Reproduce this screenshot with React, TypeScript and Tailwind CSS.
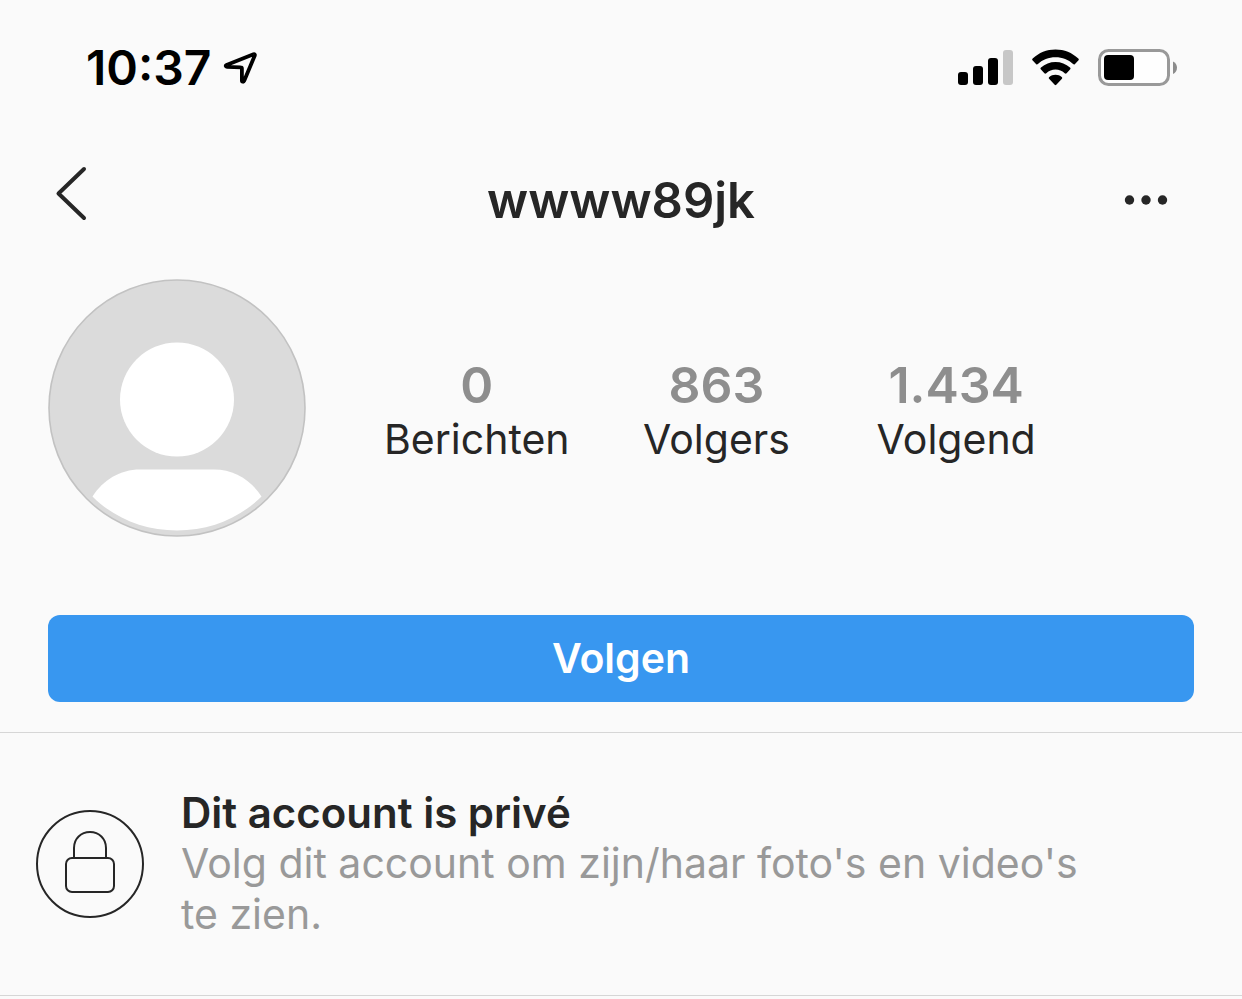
import type { ReactNode } from "react";

const stats = [
  { value: "0", label: "Berichten" },
  { value: "863", label: "Volgers" },
  { value: "1.434", label: "Volgend" },
];

const StatusBar = () => (
  <div className="flex h-34 items-center justify-between pl-[86px] pr-16 text-black">
    <div className="flex items-center gap-3">
      <span className="text-[48px] leading-none font-semibold">10:37</span>
      <svg className="h-9 w-9" viewBox="0 0 36 36" fill="none" aria-hidden="true">
        <path
          d="M3.500 15 L30.500 4.200 C31.500 3.800 32.100 4.400 31.800 5.400 L21.200 30.800 C20.600 32.200 18.900 32 18.900 30.500 L18.900 18.600 C18.900 17.700 18.600 17.400 17.700 17.400 L4 16.900 C2.600 16.800 2.300 15.500 3.500 15 Z"
          stroke="currentColor"
          strokeWidth="3.800"
          strokeLinejoin="round"
        />
      </svg>
    </div>
    <div className="flex items-center">
      <svg className="h-9 w-14" viewBox="0 0 56 36" fill="currentColor" aria-hidden="true">
        <rect x="0" y="22" width="10" height="13" rx="3" />
        <rect x="15" y="16" width="10" height="19" rx="3" />
        <rect x="30" y="8" width="10" height="27" rx="3" />
        <rect x="45" y="0" width="10" height="35" rx="3" fill="#c7c7c7" />
      </svg>
      <svg className="ml-[18px] h-9 w-12 overflow-visible" viewBox="0 0 48 36" fill="currentColor" aria-hidden="true">
        <path d="M23.500 -.6 C32.500 -.6 40 2.600 46.300 8.400 C47 9.100 47 9.700 46.300 10.400 L43 14 C42.300 14.700 41.800 14.700 41.100 14.100 C36.300 9.500 30.500 7.300 23.500 7.300 C16.500 7.300 10.700 9.500 5.900 14.100 C5.200 14.700 4.700 14.700 4 14 L.7 10.400 C0 9.700 0 9.100 .7 8.400 C7 2.600 14.500 -.6 23.500 -.6 Z" />
        <path d="M23.500 12 C29 12 34 14 38 17.600 C38.700 18.300 38.700 18.900 38 19.600 L34.600 23.200 C34 23.800 33.400 23.800 32.700 23.200 C30 20.800 27 19.600 23.500 19.600 C20 19.600 17 20.800 14.300 23.200 C13.600 23.800 13 23.800 12.400 23.200 L9 19.600 C8.300 18.900 8.300 18.300 9 17.600 C13 14 18 12 23.500 12 Z" />
        <path d="M23.500 24.700 C26 24.700 28 25.500 29.700 27 C30.400 27.700 30.400 28.300 29.700 29 L24.300 34.700 C23.700 35.300 23.300 35.300 22.700 34.700 L17.300 29 C16.600 28.300 16.600 27.700 17.300 27 C19 25.500 21 24.700 23.500 24.700 Z" />
      </svg>
      <svg className="ml-[18px] h-[38px] w-20" viewBox="0 0 80 38" aria-hidden="true">
        <rect x="1.500" y="1.500" width="69" height="34" rx="9" fill="#fefefe" stroke="#999999" strokeWidth="3" />
        <rect x="6" y="6" width="30" height="25" rx="4" />
        <path d="M75 12.500 C77.500 13.500 79 16 79 18.500 C79 21.500 77.500 24 75 25 Z" fill="#8c8c8c" />
      </svg>
    </div>
  </div>
);

const Header = () => (
  <header className="grid h-32 grid-cols-[1fr_auto_1fr] items-center px-12">
    <button type="button" aria-label="Terug" className="justify-self-start">
      <svg className="h-18 w-12" viewBox="0 0 48 72" fill="none" aria-hidden="true">
        <path
          d="M36 5 L10.500 29.500 L36 54"
          stroke="currentColor"
          strokeWidth="4"
          strokeLinecap="round"
          strokeLinejoin="round"
        />
      </svg>
    </button>
    <h1 className="text-[49px] leading-none font-semibold">wwww89jk</h1>
    <button type="button" aria-label="Opties" className="justify-self-end pr-6">
      <svg className="h-12 w-12" viewBox="0 0 48 48" fill="currentColor" aria-hidden="true">
        <circle cx="7.500" cy="24" r="4.700" />
        <circle cx="24" cy="24" r="4.700" />
        <circle cx="40.500" cy="24" r="4.700" />
      </svg>
    </button>
  </header>
);

const Avatar = () => (
  <svg className="h-[258px] w-[258px] shrink-0" viewBox="0 0 258 258" role="img" aria-label="Profielfoto">
    <circle cx="129" cy="129" r="128" fill="#dbdbdb" stroke="#c2c2c2" strokeWidth="1.600" />
    <circle cx="129" cy="120.500" r="57" fill="#ffffff" />
    <path d="M44.500 217.500 C55 201 72 190.500 92 190.500 H166 C186 190.500 203 201 213.500 217.500 C192 239 162 251.500 129 251.500 C96 251.500 66 239 44.500 217.500 Z" fill="#ffffff" />
  </svg>
);

const Stat = ({ value, label }: { value: string; label: string }) => (
  <div className="flex flex-col-reverse text-center">
    <dt className="text-[41px] leading-[54px]">{label}</dt>
    <dd className="text-[50px] leading-[54px] font-semibold text-[#8e8e8e]">{value}</dd>
  </div>
);

const Notice = ({ title, children }: { title: string; children: ReactNode }) => (
  <section className="flex items-center gap-[37px] border-y border-[#d6d6d6] px-9 pt-[54px] pb-[55px]">
    <svg className="h-[108px] w-[108px] shrink-0" viewBox="0 0 108 108" fill="none" stroke="currentColor" strokeWidth="2" aria-hidden="true">
      <circle cx="54" cy="54" r="53" />
      <rect x="30" y="48" width="48" height="34" rx="6" />
      <path d="M38 48 V38 C38 28.500 45 22 54 22 C63 22 70 28.500 70 38 V48" />
    </svg>
    <div className="max-w-[930px]">
      <h2 className="text-[42px] leading-[51px] font-semibold">{title}</h2>
      <p className="text-[41px] leading-[51px] text-[#999999]">{children}</p>
    </div>
  </section>
);

const App = () => {
  return (
    <main className="min-h-screen bg-[#fafafa] font-['Inter',sans-serif] text-[#262626]">
      <StatusBar />
      <Header />
      <div className="px-12 pt-[15px] pb-[30px]">
        <div className="flex items-center gap-[51px]">
          <Avatar />
          <dl className="mr-[118px] grid flex-1 grid-cols-3 pt-2">
            {stats.map((stat) => (
              <Stat key={stat.label} value={stat.value} label={stat.label} />
            ))}
          </dl>
        </div>
        <button
          type="button"
          className="mt-[78px] h-[87px] w-full rounded-xl bg-[#3897f0] text-[41px] leading-none font-semibold text-white"
        >
          Volgen
        </button>
      </div>
      <Notice title="Dit account is privé">
        Volg dit account om zijn/haar foto's en video's te zien.
      </Notice>
    </main>
  );
};

export default App;
